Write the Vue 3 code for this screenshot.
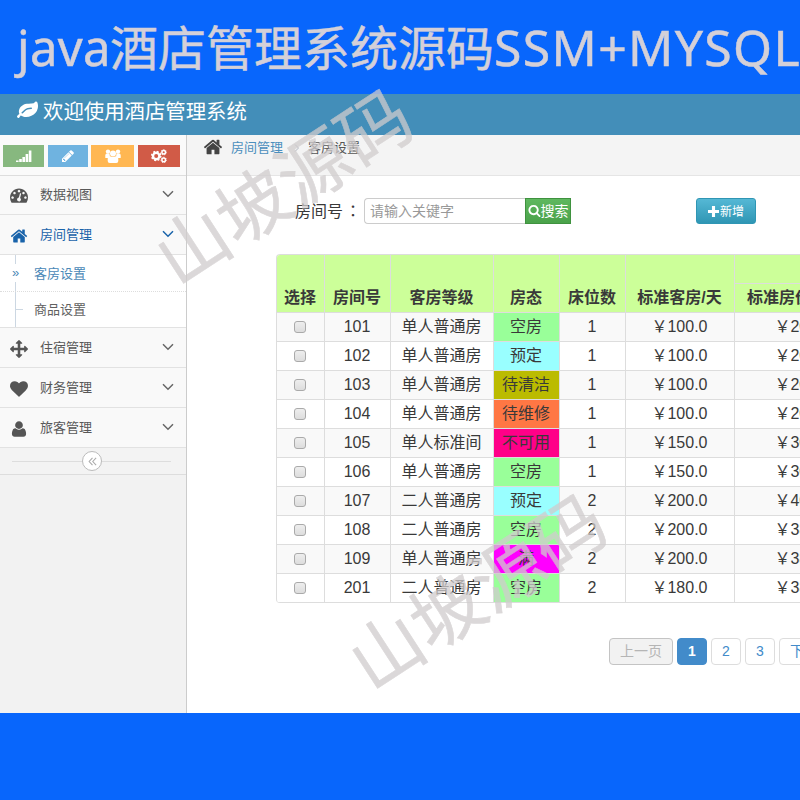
<template>
  <div class="page">
    <div class="banner">
      <span class="banner-java">java</span><span>酒店管理系统源码</span><span class="banner-tech">SSM+MYSQL</span>
    </div>

    <div class="navbar">
      <svg class="leaf" viewBox="0 0 1792 1792"><path :d="icons.leaf" /></svg>
      <span>欢迎使用酒店管理系统</span>
    </div>

    <div class="main">
      <aside class="sidebar">
        <div class="shortcuts">
          <button class="shortcut success">
            <svg viewBox="0 0 16 14"><path d="M0 11.500h2.600V13H0zM3.200 10h2.600v3H3.200zM6.400 8H9v5H6.400zM9.600 5h2.600v8H9.600zM12.800 1.500h2.600V13h-2.600z" /></svg>
          </button>
          <button class="shortcut info">
            <svg viewBox="0 0 1792 1792"><path :d="icons.pencil" /></svg>
          </button>
          <button class="shortcut warning">
            <svg viewBox="0 0 16 14">
              <circle cx="3" cy="2.600" r="2.200" />
              <circle cx="13" cy="2.600" r="2.200" />
              <path d="M.3 9V6.300Q.3 4.600 2 4.600h2.500L5 8.500 3.500 9zM15.700 9V6.300Q15.700 4.600 14 4.600h-2.500L11 8.500l1.500.5z" />
              <circle cx="8" cy="4.400" r="3" />
              <path d="M2.700 12V10Q2.700 7.300 5 7.300q3 1.500 6 0 2.300 0 2.300 2.700v2q0 2-2 2H4.700q-2 0-2-2z" />
            </svg>
          </button>
          <button class="shortcut danger">
            <svg viewBox="0 0 16 14" class="cogs">
              <circle cx="5.200" cy="7" r="3.200" stroke-width="2.400" />
              <circle cx="5.200" cy="7" r="4.600" stroke-width="1.400" stroke-dasharray="1.900 1.713" />
              <circle cx="12.700" cy="3.200" r="1.800" stroke-width="1.500" />
              <circle cx="12.700" cy="3.200" r="2.700" stroke-width=".8" stroke-dasharray="1.200 1.200" />
              <circle cx="12.700" cy="10.900" r="1.800" stroke-width="1.500" />
              <circle cx="12.700" cy="10.900" r="2.700" stroke-width=".8" stroke-dasharray="1.200 1.200" />
            </svg>
          </button>
        </div>

        <ul class="menu">
          <li v-for="item in menu" :key="item.text" :class="{ open: item.children }">
            <a class="menu-item">
              <svg class="menu-icon" viewBox="0 0 1792 1792"><path :d="icons[item.icon]" /></svg>
              <span class="menu-text">{{ item.text }}</span>
              <svg class="arrow" viewBox="0 0 12 8"><path d="M1 1.200l5 5 5-5" /></svg>
            </a>
            <ul v-if="item.children" class="submenu">
              <li v-for="(child, i) in item.children" :key="child" :class="{ active: i === 0 }">
                <span class="marker">{{ i === 0 ? '»' : '' }}</span>
                <span class="submenu-text">{{ child }}</span>
              </li>
            </ul>
          </li>
        </ul>

        <div class="collapse">
          <span class="collapse-btn">
            <svg viewBox="0 0 10 10"><path d="M5 1L1.300 5 5 9M9 1L5.300 5 9 9" /></svg>
          </span>
        </div>
      </aside>

      <section class="content">
        <div class="breadcrumbs">
          <svg class="home" viewBox="0 0 1792 1792"><path :d="icons.home" /></svg>
          <a>房间管理</a>
          <svg class="sep" viewBox="0 0 6 8"><path d="M1 .5L4.500 4 1 7.500" /></svg>
          <span>客房设置</span>
        </div>

        <div class="toolbar">
          <label>房间号<span class="colon">：</span></label>
          <input type="text" placeholder="请输入关键字" />
          <button class="btn-search">
            <svg viewBox="0 0 1792 1792"><path :d="icons.search" /></svg>搜索
          </button>
          <button class="btn-add">
            <svg viewBox="0 0 12 12"><path d="M4.300 0h3.400v4.300H12v3.400H7.700V12H4.300V7.700H0V4.300h4.300z" /></svg>新增
          </button>
        </div>

        <table class="rooms">
          <colgroup>
            <col v-for="(w, i) in widths" :key="i" :style="{ width: w + 'px' }" />
          </colgroup>
          <thead>
            <tr>
              <th v-for="h in headers" :key="h" rowspan="2">{{ h }}</th>
              <th></th>
            </tr>
            <tr>
              <th class="last">标准房价/天</th>
            </tr>
          </thead>
          <tbody>
            <tr v-for="room in rooms" :key="room.no">
              <td><span class="checkbox"></span></td>
              <td>{{ room.no }}</td>
              <td>{{ room.type }}</td>
              <td :class="['state', room.state]">{{ states[room.state] }}</td>
              <td>{{ room.beds }}</td>
              <td>￥{{ room.price }}</td>
              <td>￥{{ room.full }}</td>
            </tr>
          </tbody>
        </table>

        <div class="pager">
          <a class="disabled">上一页</a>
          <a class="current">1</a>
          <a>2</a>
          <a>3</a>
          <a class="next">下一页</a>
        </div>
      </section>
    </div>

    <div class="watermark first">山坡源码</div>
    <div class="watermark second">山坡源码</div>
  </div>
</template>

<script setup>
const icons = {
  leaf: 'M1280 704q0-26-19-45t-45-19q-172 0-318 49.5t-259.5 134-235.5 219.5q-19 21-19 45 0 26 19 45t45 19q24 0 45-19 27-24 74-71t67-66q137-124 268.5-176t313.5-52q26 0 45-19t19-45zm512-198q0 95-20 193-46 224-184.5 383t-357.5 268q-214 108-438 108-148 0-286-47-15-5-88-42t-96-37q-16 0-39.5 32t-45 70-52.5 70-60 32q-43 0-63.5-17.5t-45.5-59.5q-2-4-6-11t-5.5-10-3-9.5-1.500-13.500q0-35 31-73.500t68-65.500 68-56 31-48q0-4-14-38t-16-44q-9-51-9-104 0-115 43.500-220t119-184.500 170.500-139 204-95.500q55-18 145-25.500t179.500-9 178.500-6 163.500-24 113.500-56.500l29.500-29.500 29.500-28 27-20 36.500-16 43.500-4.500q39 0 70.500 46t47.500 112 24 124 8 96z',
  pencil: 'M491 1536l91-91-235-235-91 91v107h128v128h107zm523-928q0-22-22-22-10 0-17 7l-542 542q-7 7-7 17 0 22 22 22 10 0 17-7l542-542q7-7 7-17zm-54-192l416 416-832 832h-416v-416zm683 96q0 53-37 90l-166 166-416-416 166-165q36-38 90-38 53 0 91 38l235 234q37 39 37 91z',
  home: 'M1472 992v480q0 26-19 45t-45 19h-384v-384h-256v384h-384q-26 0-45-19t-19-45v-480q0-1 .5-3t.5-3l575-474 575 474q1 2 1 6zm223-69l-62 74q-8 9-21 11h-3q-13 0-21-7l-692-577-692 577q-12 8-24 7-13-2-21-11l-62-74q-8-10-7-23.500t11-21.500l719-599q32-26 76-26t76 26l244 204v-195q0-14 9-23t23-9h192q14 0 23 9t9 23v408l219 182q10 8 11 21.500t-7 23.500z',
  search: 'M1216 832q0-185-131.500-316.500t-316.500-131.500-316.500 131.500-131.500 316.500 131.500 316.500 316.500 131.500 316.500-131.500 131.500-316.500zm512 832q0 52-38 90t-90 38q-54 0-90-38l-343-342q-179 124-399 124-143 0-273.500-55.500t-225-150-150-225-55.500-273.500 55.500-273.500 150-225 225-150 273.500-55.500 273.500 55.500 225 150 150 225 55.500 273.500q0 220-124 399l343 343q37 37 37 90z',
  dashboard: 'M384 1152q0-53-37.500-90.500t-90.500-37.500-90.500 37.500-37.500 90.500 37.500 90.500 90.500 37.500 90.500-37.500 37.500-90.500zm192-448q0-53-37.500-90.500t-90.500-37.500-90.500 37.500-37.500 90.500 37.500 90.500 90.500 37.500 90.500-37.500 37.500-90.500zm428 481l101-382q6-26-7.500-48.500t-38.500-29.500-48 6.500-30 39.500l-101 382q-60 5-107 43.500t-63 98.500q-20 77 20 146t117 89 146-20 89-117q16-60-6-117t-72-91zm660-33q0-53-37.500-90.500t-90.500-37.500-90.500 37.500-37.500 90.500 37.500 90.500 90.500 37.500 90.500-37.500 37.500-90.500zm-640-640q0-53-37.500-90.500t-90.500-37.500-90.500 37.500-37.500 90.500 37.500 90.500 90.500 37.500 90.500-37.500 37.500-90.500zm448 192q0-53-37.500-90.500t-90.500-37.500-90.500 37.500-37.500 90.500 37.500 90.500 90.500 37.500 90.500-37.500 37.500-90.500zm320 448q0 261-141 483-19 29-54 29h-1402q-35 0-54-29-141-221-141-483 0-182 71-348t191-286 286-191 348-71 348 71 286 191 191 286 71 348z',
  arrows: 'M1792 896q0 26-19 45l-256 256q-19 19-45 19t-45-19-19-45v-128h-384v384h128q26 0 45 19t19 45-19 45l-256 256q-19 19-45 19t-45-19l-256-256q-19-19-19-45t19-45 45-19h128v-384h-384v128q0 26-19 45t-45 19-45-19l-256-256q-19-19-19-45t19-45l256-256q19-19 45-19t45 19 19 45v128h384v-384h-128q-26 0-45-19t-19-45 19-45l256-256q19-19 45-19t45 19l256 256q19 19 19 45t-19 45-45 19h-128v384h384v-128q0-26 19-45t45-19 45 19l256 256q19 19 19 45z',
  heart: 'M896 1664q-26 0-44-18l-624-602q-10-8-27.500-26t-55.500-65.500-68-97.500-53.500-121-23.500-138q0-220 127-344t351-124q62 0 126.500 21.500t120 58 95.500 68.500 76 68q36-36 76-68t95.500-68.500 120-58 126.500-21.500q224 0 351 124t127 344q0 221-229 450l-623 600q-18 18-44 18z',
  user: 'M1600 1405q0 120-73 189.500t-194 69.500h-874q-121 0-194-69.500t-73-189.500q0-53 3.500-103.500t14-109 26.500-108.500 43-97.500 62-81 85.500-53.500 111.500-20q9 0 42 21.500t74.500 48 108 48 133.500 21.500 133.500-21.500 108-48 74.500-48 42-21.500q61 0 111.500 20t85.500 53.500 62 81 43 97.500 26.500 108.500 14 109 3.500 103.500zm-320-893q0 159-112.500 271.500t-271.500 112.500-271.500-112.500-112.500-271.500 112.500-271.500 271.500-112.500 271.500 112.500 112.500 271.500z'
}

const menu = [
  { text: '数据视图', icon: 'dashboard' },
  { text: '房间管理', icon: 'home', children: ['客房设置', '商品设置'] },
  { text: '住宿管理', icon: 'arrows' },
  { text: '财务管理', icon: 'heart' },
  { text: '旅客管理', icon: 'user' }
]

const widths = [48, 66, 103, 66, 66, 109, 137]
const headers = ['选择', '房间号', '客房等级', '房态', '床位数', '标准客房/天']

const states = {
  free: '空房',
  booked: '预定',
  cleaning: '待清洁',
  repair: '待维修',
  disabled: '不可用',
  full: '满'
}

const rooms = [
  { no: 101, type: '单人普通房', state: 'free', beds: 1, price: '100.0', full: '200.0' },
  { no: 102, type: '单人普通房', state: 'booked', beds: 1, price: '100.0', full: '200.0' },
  { no: 103, type: '单人普通房', state: 'cleaning', beds: 1, price: '100.0', full: '200.0' },
  { no: 104, type: '单人普通房', state: 'repair', beds: 1, price: '100.0', full: '200.0' },
  { no: 105, type: '单人标准间', state: 'disabled', beds: 1, price: '150.0', full: '300.0' },
  { no: 106, type: '单人普通房', state: 'free', beds: 1, price: '150.0', full: '300.0' },
  { no: 107, type: '二人普通房', state: 'booked', beds: 2, price: '200.0', full: '400.0' },
  { no: 108, type: '二人普通房', state: 'free', beds: 2, price: '200.0', full: '380.0' },
  { no: 109, type: '单人普通房', state: 'full', beds: 2, price: '200.0', full: '380.0' },
  { no: 201, type: '二人普通房', state: 'free', beds: 2, price: '180.0', full: '380.0' }
]
</script>

<style>
body {
  margin: 0;
  overflow: hidden;
}
</style>

<style scoped>
.page {
  position: relative;
  width: 800px;
  height: 800px;
  overflow: hidden;
  background: #0866fc;
  font-family: "Liberation Sans", "Noto Sans CJK SC", sans-serif;
  font-size: 13px;
  color: #393939;
}

.page * {
  box-sizing: border-box;
}

ul {
  list-style: none;
  margin: 0;
  padding: 0;
}

.banner {
  height: 94px;
  padding-left: 17px;
  font-family: "Noto Sans", "Noto Sans CJK SC", sans-serif;
  font-size: 48px;
  line-height: 94px;
  color: #d4d0d8;
  -webkit-text-stroke: 0.5px #d4d0d8;
  white-space: nowrap;
}

.banner-java {
  display: inline-block;
  width: 93px;
  font-size: 49px;
  letter-spacing: 0.3px;
}

.banner-tech {
  font-size: 50px;
  letter-spacing: 1.300px;
}

.navbar {
  display: flex;
  align-items: center;
  gap: 5px;
  height: 41px;
  padding: 0 0 9px 17px;
  background: #438eb9;
  color: #fff;
  font-size: 20.400px;
}

.leaf {
  width: 21px;
  height: 21px;
  fill: #fff;
}

.main {
  display: flex;
  height: 578px;
  background: #fff;
}

/* 側邊欄 */
.sidebar {
  flex: none;
  width: 187px;
  border-right: 1px solid #ccc;
  background: #f2f2f2;
}

.shortcuts {
  display: flex;
  height: 41px;
  padding: 10px 0 0 3px;
  gap: 4px;
  background: #fafafa;
  border-bottom: 1px solid #ddd;
}

.shortcut {
  display: flex;
  align-items: center;
  justify-content: center;
  height: 22px;
  padding: 0;
  border: 0;
}

.shortcut svg {
  width: 16px;
  height: 14px;
  fill: #fff;
}

.shortcut.success { width: 41px; background: #87b87f; }
.shortcut.info { width: 40px; background: #6fb3e0; }
.shortcut.warning { width: 43px; background: #ffb752; margin-left: -1px; }
.shortcut.danger { width: 42px; background: #d15b47; }

.shortcut .cogs {
  fill: none;
  stroke: #fff;
}

.menu-item {
  display: flex;
  align-items: center;
  height: 40px;
  padding: 0 12px 0 10px;
  background: #f9f9f9;
  border-bottom: 1px solid #e2e2e2;
  color: #585858;
}

.menu > li:first-child .menu-item {
  height: 39px;
  padding-bottom: 2px;
}

.menu-icon {
  width: 18px;
  height: 18px;
  margin: 2px 12px 0 0;
  fill: #555;
}

.menu-text {
  flex: 1;
  padding-bottom: 2px;
}

.arrow {
  width: 12px;
  height: 8px;
  margin-bottom: 1px;
  fill: none;
  stroke: #666;
  stroke-width: 1.500;
}

.open .menu-item { color: #1963aa; }
.open .menu-icon { fill: #1963aa; }
.open .arrow { stroke: #1963aa; }

.submenu {
  border-bottom: 1px solid #e2e2e2;
  background: linear-gradient(#ccd7e2, #ccd7e2) 15px 0 / 1px 100% no-repeat #fff;
}

.submenu li {
  display: flex;
  align-items: center;
  height: 37px;
  color: #616161;
}

.submenu li + li {
  height: 35px;
}

.submenu .active {
  border-bottom: 1px dotted #ddd;
  color: #4b88b7;
}

.submenu-text {
  padding-bottom: 2px;
}

.marker {
  width: 7px;
  height: 18px;
  margin: 0 15px 0 12px;
  line-height: 17px;
}

.active .marker {
  background: #fff;
}

li:not(.active) > .marker {
  height: 1px;
  margin-left: 16px;
  margin-right: 11px;
  background: #ccd7e2;
}

.collapse {
  display: flex;
  justify-content: center;
  align-items: center;
  height: 27px;
  padding-right: 2px;
  border-bottom: 1px solid #ddd;
  background: linear-gradient(#ddd, #ddd) 12px 13px / 159px 1px no-repeat #f3f3f3;
}

.collapse-btn {
  display: flex;
  align-items: center;
  justify-content: center;
  width: 20px;
  height: 20px;
  border: 1px solid #bbb;
  border-radius: 50%;
  background: #fff;
}

.collapse-btn svg {
  width: 9px;
  height: 9px;
  fill: none;
  stroke: #aaa;
  stroke-width: 1.200;
}

/* 內容區 */
.content {
  flex: 1;
  min-width: 0;
  overflow: hidden;
}

.breadcrumbs {
  display: flex;
  align-items: center;
  height: 41px;
  padding: 0 0 18px 16px;
  background: #f4f4f4;
  border-bottom: 1px solid #e5e5e5;
  color: #555;
}

.breadcrumbs a { color: #4c8fbd; }

.home {
  width: 20px;
  height: 20px;
  margin: 1px 8px 0 0;
  fill: #444;
}

.sep {
  width: 6px;
  height: 8px;
  margin: 4px 8px 0 11px;
  fill: none;
  stroke: #b2b6bf;
}

.toolbar {
  display: flex;
  align-items: center;
  height: 26px;
  margin: 22px 0 30px 108px;
  font-size: 16px;
}

.toolbar label {
  width: 69px;
  padding-bottom: 3px;
  white-space: nowrap;
}

.colon {
  font-family: "Noto Sans CJK TC", sans-serif;
  margin-left: 2px;
}

.toolbar input {
  width: 161px;
  height: 26px;
  padding: 0 5px;
  border: 1px solid #ccc;
  border-right: 0;
  border-radius: 4px 0 0 4px;
  font: 14px "Liberation Sans", "Noto Sans CJK SC", sans-serif;
}

.toolbar input::placeholder {
  color: #999;
}

.toolbar button {
  display: flex;
  align-items: center;
  justify-content: center;
  height: 26px;
  padding: 0 0 2px;
  font-family: inherit;
  color: #fff;
  white-space: nowrap;
}

.toolbar svg {
  width: 13px;
  height: 13px;
  fill: #fff;
}

.btn-search {
  width: 46px;
  border: 1px solid #3f923f;
  background: linear-gradient(#5fb85f, #4aa24a);
  font-size: 14px;
}

.btn-add {
  width: 60px;
  margin-left: 125px;
  border: 1px solid #2f96b4;
  border-radius: 3px;
  background: linear-gradient(#55b8d5, #2f96b4);
  font-size: 12px;
}

.btn-add svg {
  width: 11px;
  height: 11px;
  margin: 2px 1px 0 0;
}

.rooms {
  table-layout: fixed;
  width: 596px;
  margin-left: 89px;
  border-collapse: separate;
  border-spacing: 0;
  border-top: 1px solid #ddd;
  border-left: 1px solid #ddd;
  border-radius: 4px 0 0 4px;
  overflow: hidden;
  font-size: 16px;
  line-height: 20px;
  text-align: center;
}

th,
td {
  height: 29px;
  padding: 0 1px 0 0;
  border-right: 1px solid #ddd;
  border-bottom: 1px solid #ddd;
  white-space: nowrap;
}

th {
  padding-bottom: 4px;
  background: #cf9;
  vertical-align: bottom;
}

th.last {
  padding-left: 12px;
  text-align: left;
}

tbody tr:nth-child(odd) td { background-color: #f9f9f9; }

tbody tr .state.free { background-color: #9f9; }
tbody tr .state.booked { background-color: #9ff; }
tbody tr .state.cleaning { background-color: #bb0; }
tbody tr .state.repair { background-color: #f74; }
tbody tr .state.disabled { background-color: #f08; }
tbody tr .state.full { background-color: #f0f; }

.checkbox {
  display: block;
  width: 12px;
  height: 12px;
  margin: 0 auto;
  border: 1px solid #aaa;
  border-radius: 3px;
  background: linear-gradient(#eee, #ddd);
}

.pager {
  display: flex;
  gap: 4px;
  margin: 35px 0 0 422px;
  font-size: 14px;
}

.pager a {
  flex: none;
  width: 30px;
  height: 27px;
  border: 1px solid #ddd;
  border-radius: 4px;
  background: #fff;
  color: #428bca;
  line-height: 25px;
  text-align: center;
}

.pager .disabled {
  width: 64px;
  border-color: #c4c4c4;
  background: #f2f2f2;
  color: #b5b5b5;
}

.pager .current {
  border-color: #428bca;
  background: #428bca;
  color: #fff;
  font-weight: bold;
}

.pager .next {
  width: 64px;
}

/* 浮水印 */
.watermark {
  position: absolute;
  width: 288px;
  height: 72px;
  font-family: "Noto Sans CJK SC", sans-serif;
  font-size: 72px;
  line-height: 72px;
  color: #d0cccd;
  -webkit-text-stroke: 0.6px #d0cccd;
  opacity: 0.75;
  white-space: nowrap;
  transform: rotate(-33deg);
}

.watermark.first {
  left: 137px;
  top: 147px;
}

.watermark.second {
  left: 331px;
  top: 552px;
}
</style>
